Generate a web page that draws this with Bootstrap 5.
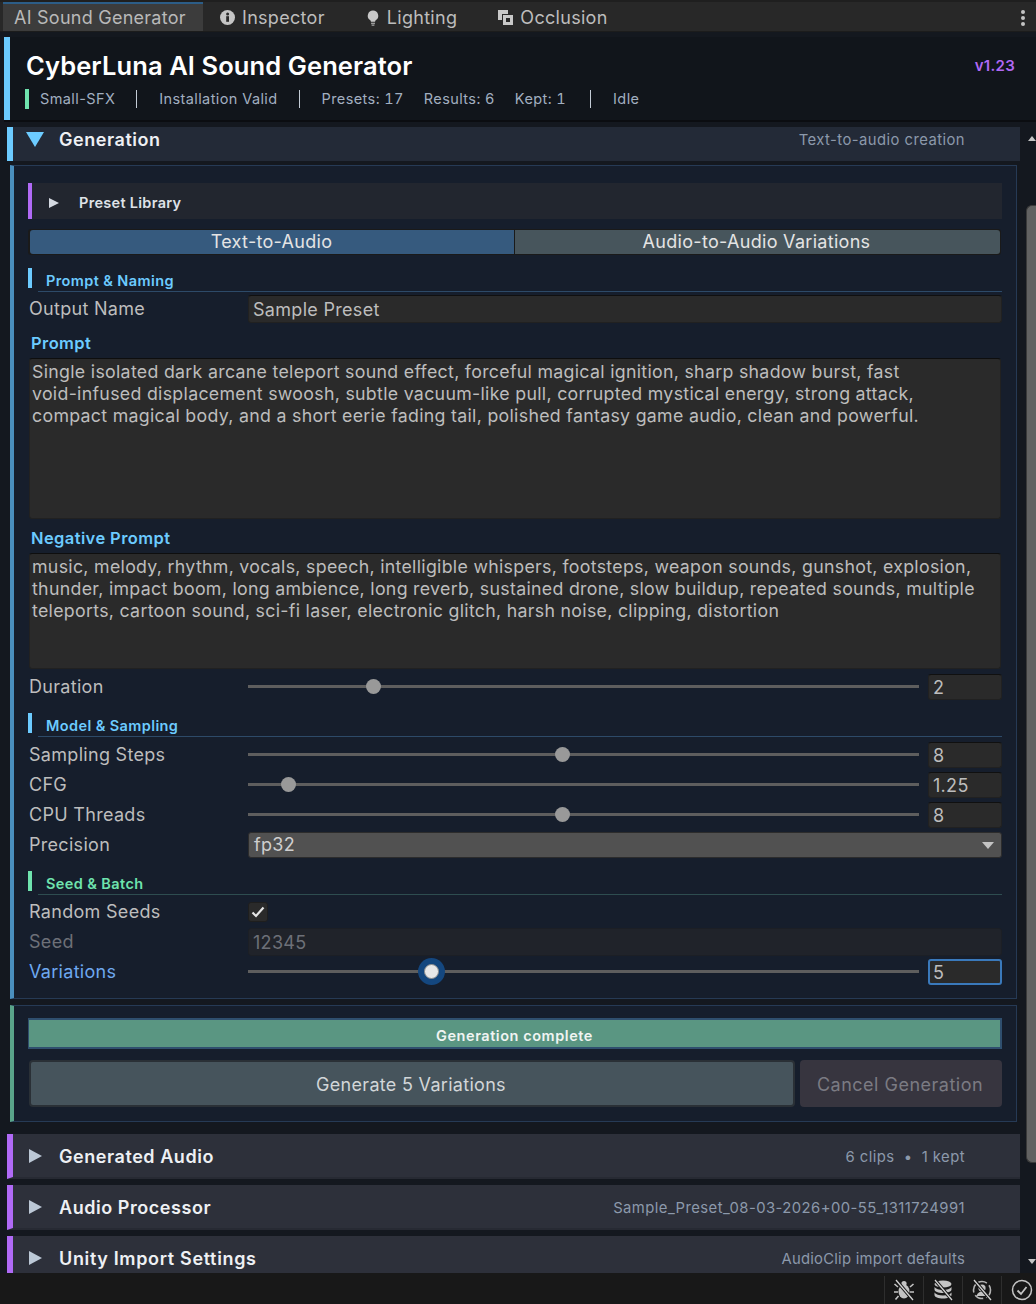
<!DOCTYPE html>
<html lang="en">
<head>
<meta charset="UTF-8">
<title>CyberLuna AI Sound Generator</title>
<link href="https://cdn.jsdelivr.net/npm/bootstrap@5.3.0/dist/css/bootstrap.min.css" rel="stylesheet">
<style>
html, body { height: 100%; overflow: hidden; }
body { background: #14181f; font-family: Inter, "Liberation Sans", sans-serif; color: #c4c4c4; font-size: 18px; letter-spacing: .3px; line-height: 22px; }
.app-frame { height: 1304px; width: 1036px; }

/* tab strip */
.tab-strip { height: 32px; background: #282828; border-top: 2px solid #1f1f1f; border-bottom: 1px solid #1c1c1c; color: #bdbdbd; padding-left: 3px; }
.tab-item { height: 29px; padding: 2px 24px 0 17px; gap: 7px; white-space: nowrap; }
.tab-item.is-active { width: 200px; padding-left: 11px; padding-right: 0; padding-top: 0; background: #3c3c3c; border-top: 2px solid #2c5d87; color: #b9b9b9; letter-spacing: .25px; }
.tab-kebab { margin-left: auto; margin-right: 11px; }

/* header */
.tool-head { height: 83px; margin: 5px 0 0 4px; background: #11151b; border-left: 6px solid #6ccbff; }
.tool-title { color: #fff; font-size: 25.5px; font-weight: 600; line-height: 34px; letter-spacing: .1px; padding: 12px 0 0 16px; }
.tool-ver { color: #b068f5; font-size: 15px; font-weight: 600; margin: 18px 21px 0 0; }
.tool-stats { font-size: 14.5px; color: #a2afc0; padding-left: 15px; margin-top: 6px; height: 20px; letter-spacing: .4px; }
.stat-tick { width: 4px; height: 20px; background: #6fe3ae; margin-right: 11px; }
.stat-bar { width: 1px; height: 18px; background: #c4ccd6; margin: 0 22px 0 21px; }
.stat-bar.is-last { margin-left: 24px; }
.stat-num { font-variant-numeric: tabular-nums; }
.stat-next { margin-left: 20px; }
.head-rule { height: 2px; margin-left: 4px; background: #0b0d11; }

/* scrolling area */
.scroll-area { height: 1146px; margin-top: 5px; overflow: hidden; }
.scroll-main { width: 1020px; padding-left: 7px; }
.scroll-rail { width: 16px; position: relative; }
.rail-up, .rail-down { position: absolute; right: 0; width: 0; height: 0; border-left: 4px solid transparent; border-right: 4px solid transparent; }
.rail-up { top: 9px; border-bottom: 5px solid #c4c4c4; }
.rail-down { top: 1132px; border-top: 5px solid #c4c4c4; }
.rail-thumb { position: absolute; left: 6px; right: 0; top: 78px; height: 958px; background: #626262; border: 1px solid #3a3a3a; border-right: 0; border-radius: 6px 0 0 6px; }

/* foldouts */
.fold-head { background: #2d303a; border-left: 6px solid #b06af6; border-bottom: 2px solid #272a33; height: 45px; margin-bottom: 6px; padding: 2px 55px 0 16px; }
.fold-head.is-open { background: #232a37; border-left-color: #6ccbff; height: 34px; margin-bottom: 4px; border-bottom: 0; padding-top: 0; padding-bottom: 8px; }
.fold-name { color: #eef0f4; font-size: 18px; font-weight: 600; letter-spacing: .55px; margin-left: 17px; }
.fold-name.is-wide { letter-spacing: .65px; }
.fold-note { color: #8c99ab; font-size: 14.8px; letter-spacing: .45px; margin-left: auto; }
.fold-note.is-tight { letter-spacing: .25px; }
.arrow-right { width: 0; height: 0; border-top: 7px solid transparent; border-bottom: 7px solid transparent; border-left: 13px solid #bcc8d6; margin-top: -2px; }
.arrow-down { width: 0; height: 0; border-left: 9px solid transparent; border-right: 9px solid transparent; border-top: 15px solid #6ccbff; margin-left: -3px; margin-right: -2px; margin-top: -2px; }

/* panels */
.tool-panel { background: #161e2c; border: 1px solid #263a55; border-left: 4px solid #4a8fbe; margin: 0 3px 6px 3px; padding: 17px 14px 0 14px; }
.panel-gen { height: 834px; }
.panel-run { height: 117px; border-left-color: #5aa48a; padding-top: 12px; margin-bottom: 12px; }
.preset-row { height: 36px; background: #22262f; border-left: 4px solid #b06af6; padding: 4px 0 0 17px; color: #dfe2e8; font-size: 14.5px; font-weight: 600; letter-spacing: .3px; margin-bottom: 10px; }
.preset-row .arrow-right { border-top-width: 5px; border-bottom-width: 5px; border-left-width: 10px; border-left-color: #d5dae2; margin-right: 20px; margin-top: 0; }
.seg-wrap { height: 26px; margin-right: 1px; background: #1a1a1a; border-radius: 3px; padding: 1px; }
.seg-btn { flex: 1 1 0; border-radius: 0; color: #e4e4e4; line-height: 23px; padding: 0; text-align: center; font-size: 18px; }
.seg-btn.is-on { background: #365a7e; border-radius: 3px 0 0 3px; margin-left: 1px; padding-right: 1px; }
.seg-btn.is-off { background: #47555c; border-radius: 0 3px 3px 0; margin-left: 1px; padding-right: 2px; }

.group-head { height: 24px; position: relative; }
.group-tick { width: 4px; height: 20px; background: #6ccbff; }
.group-name { color: #6ccbff; font-size: 14.5px; font-weight: 600; margin-left: 14px; letter-spacing: .4px; margin-top: 2px; }
.group-line { position: absolute; left: 10px; right: 0; bottom: 0; height: 1px; background: #2d4a68; }
.group-head.is-seed .group-tick { background: #6fe3ae; }
.group-head.is-seed .group-name { color: #6fe3ae; }
.group-head.is-seed .group-line { background: #2e4d50; }
.gap-seg { margin-top: 13px; }
.gap-model { margin-top: 11px; }
.gap-seed { margin-top: 11px; }
.gap-row { margin-top: 2px; }
.gap-row-wide { margin-top: 3px; }

.prop-row { height: 30px; padding-left: 1px; }
.prop-name { width: 219px; flex: none; color: #bdbdbd; }
.prop-name.is-dim { color: #6d7078; }
.prop-name.is-hot { color: #6ea8f0; }
.prop-input.form-control { background: #2a2a2a; border: 1px solid #212121; border-top-color: #101010; border-radius: 3px; color: #bdbdbd; font-size: 18px; line-height: 22px; padding: 0 4px; height: 28px; box-shadow: none; letter-spacing: .3px; }
.prop-input.is-short { width: 74px; flex: none; height: 26px; margin-left: 9px; padding: 0 3px 0 4px; }
.prop-input.is-focus { border: 2px solid #3a79bb; height: 26px; padding: 0 3px; }
.prop-input.is-off { background: #20232a; color: #6d7078; border-color: #1c1f25; }
.prop-slider.form-range { flex: 1 1 0; width: auto; height: 18px; padding: 0; margin-bottom: 2px; }
.prop-slider::-webkit-slider-runnable-track { height: 3px; background: #5e5e5e; border-radius: 0; }
.prop-slider::-webkit-slider-thumb { -webkit-appearance: none; width: 15px; height: 15px; margin-top: -6px; border-radius: 50%; background: #999; border: 0; }
.prop-slider.is-focus::-webkit-slider-thumb { background: #e8e8e8; border: 1px solid #8d8d8d; box-shadow: 0 0 0 6px #14477f; }

.text-title { color: #6ccbff; font-weight: 600; font-size: 16.5px; height: 22px; margin-top: 8px; padding-left: 3px; letter-spacing: .4px; }
.text-box.form-control { background: #2a2a2a; border: 1px solid #212121; border-top-color: #0e0e0e; border-radius: 3px; color: #bdbdbd; font-size: 17.75px; line-height: 22px; letter-spacing: .3px; padding: 2px; margin-top: 4px; margin-left: 1px; resize: none; box-shadow: none; overflow: hidden; white-space: pre; width: calc(100% - 2px); }
.box-prompt { height: 161px; }
.box-negative { height: 116px; }
.pick-box { height: 26px; background: #515151; border: 1px solid #2c2c2c; border-radius: 3px; color: #cfcfcf; padding: 0 5px; }
.pick-arrow { margin-left: auto; width: 0; height: 0; border-left: 6px solid transparent; border-right: 6px solid transparent; border-top: 7px solid #c4c4c4; margin-right: 2px; }
.tick-box { width: 20px; height: 20px; background: #2a2a2a; border: 1px solid #1e1e1e; border-radius: 3px; }

.done-bar { height: 31px; margin-bottom: 11px; padding-top: 4px; background: #5a9682; border: 2px solid #2f4f6e; border-width: 2px 2px 2px 1px; color: #f0f4f2; font-size: 14.5px; font-weight: 600; letter-spacing: .55px; }
.run-btn.btn { height: 47px; border-radius: 4px; font-size: 18px; letter-spacing: .3px; padding: 1px 2px 0 0; }
.run-main.btn { width: 766px; margin-left: 1px; background: #46545c; border: 2px solid #2a3036; color: #d2d6d8; }
.run-stop.btn { flex: 1 1 0; margin-left: 5px; background: #37353f; border: 0; color: #7b7b83; opacity: 1; letter-spacing: .5px; }

/* status bar */
.status-strip { height: 31px; background: #181818; }
.status-cell { width: 39px; height: 28px; margin-top: 3px; border-left: 1px solid #2e2e2e; }
.status-cell:last-child { width: 35px; padding-left: 5px; }
.tab-dots { gap: 2px; }
.tab-dots span { width: 4px; height: 4px; border-radius: 50%; background: #c4c4c4; }
</style>
</head>
<body>
<div class="app-frame d-flex flex-column">

    <!-- tabs -->
    <div class="tab-strip d-flex align-items-start flex-shrink-0">
        <div class="tab-item is-active d-flex align-items-center">AI Sound Generator</div>
        <div class="tab-item d-flex align-items-center">
            <svg width="15" height="15" viewBox="0 0 15 15"><circle cx="7.5" cy="7.5" r="7.5" fill="#c4c4c4"/><rect x="6.2" y="6.2" width="2.8" height="5.6" fill="#282828"/><circle cx="7.6" cy="3.9" r="1.5" fill="#282828"/></svg>
            Inspector
        </div>
        <div class="tab-item d-flex align-items-center">
            <svg width="14" height="18" viewBox="0 0 15 18"><path d="M7.5 1a5.6 5.6 0 0 0-3.2 10.2c.6.5.9 1.1 1 1.8h4.4c.1-.7.4-1.3 1-1.8A5.6 5.6 0 0 0 7.5 1z" fill="#c8c8c8"/><rect x="5.4" y="14" width="4.2" height="1.6" fill="#9a9a9a"/><rect x="6" y="16" width="3" height="1.4" fill="#9a9a9a"/></svg>
            Lighting
        </div>
        <div class="tab-item d-flex align-items-center">
            <svg width="15" height="15" viewBox="0 0 15 15"><path d="M0 0h10v4H4v6H0z" fill="#c8c8c8"/><path d="M5 5h10v10H5zM8 8v4h4V8z" fill="#c8c8c8" fill-rule="evenodd"/></svg>
            Occlusion
        </div>
        <div class="tab-kebab tab-dots d-flex flex-column pt-2"><span></span><span></span><span></span></div>
    </div>

    <!-- title block -->
    <div class="tool-head flex-shrink-0">
        <div class="d-flex justify-content-between align-items-start">
            <div class="tool-title">CyberLuna AI Sound Generator</div>
            <div class="tool-ver">v1.23</div>
        </div>
        <div class="tool-stats d-flex align-items-center">
            <span class="stat-tick"></span><span>Small-SFX</span><span class="stat-bar"></span><span>Installation Valid</span><span class="stat-bar"></span><span class="stat-num">Presets: 17</span><span class="stat-num stat-next">Results: 6</span><span class="stat-num stat-next">Kept: 1</span><span class="stat-bar is-last"></span><span>Idle</span>
        </div>
    </div>
    <div class="head-rule flex-shrink-0"></div>

    <div class="scroll-area d-flex flex-shrink-0">
        <div class="scroll-main">
            <div class="fold-head is-open d-flex align-items-center">
                <span class="arrow-down"></span><span class="fold-name">Generation</span><span class="fold-note">Text-to-audio creation</span>
            </div>

            <div class="tool-panel panel-gen">
                <div class="preset-row d-flex align-items-center"><span class="arrow-right"></span>Preset Library</div>
                <div class="seg-wrap d-flex">
                    <div class="seg-btn is-on">Text-to-Audio</div>
                    <div class="seg-btn is-off">Audio-to-Audio Variations</div>
                </div>

                <div class="group-head d-flex gap-seg"><span class="group-tick"></span><span class="group-name">Prompt &amp; Naming</span><span class="group-line"></span></div>
                <div class="prop-row d-flex align-items-center gap-row">
                    <span class="prop-name">Output Name</span>
                    <input class="form-control prop-input" value="Sample Preset">
                </div>
                <div class="text-title d-flex align-items-center">Prompt</div>
                <textarea class="form-control text-box box-prompt" rows="7">Single isolated dark arcane teleport sound effect, forceful magical ignition, sharp shadow burst, fast
void-infused displacement swoosh, subtle vacuum-like pull, corrupted mystical energy, strong attack,
compact magical body, and a short eerie fading tail, polished fantasy game audio, clean and powerful.</textarea>
                <div class="text-title d-flex align-items-center">Negative Prompt</div>
                <textarea class="form-control text-box box-negative" rows="5">music, melody, rhythm, vocals, speech, intelligible whispers, footsteps, weapon sounds, gunshot, explosion,
thunder, impact boom, long ambience, long reverb, sustained drone, slow buildup, repeated sounds, multiple
teleports, cartoon sound, sci-fi laser, electronic glitch, harsh noise, clipping, distortion</textarea>
                <div class="prop-row d-flex align-items-center gap-row-wide">
                    <span class="prop-name">Duration</span>
                    <input type="range" class="form-range prop-slider" step="0.1" value="18">
                    <input class="form-control prop-input is-short" value="2">
                </div>

                <div class="group-head d-flex gap-model"><span class="group-tick"></span><span class="group-name">Model &amp; Sampling</span><span class="group-line"></span></div>
                <div class="prop-row d-flex align-items-center gap-row-wide">
                    <span class="prop-name">Sampling Steps</span>
                    <input type="range" class="form-range prop-slider" step="0.1" value="46.8">
                    <input class="form-control prop-input is-short" value="8">
                </div>
                <div class="prop-row d-flex align-items-center">
                    <span class="prop-name">CFG</span>
                    <input type="range" class="form-range prop-slider" step="0.1" value="5">
                    <input class="form-control prop-input is-short" value="1.25">
                </div>
                <div class="prop-row d-flex align-items-center">
                    <span class="prop-name">CPU Threads</span>
                    <input type="range" class="form-range prop-slider" step="0.1" value="46.8">
                    <input class="form-control prop-input is-short" value="8">
                </div>
                <div class="prop-row d-flex align-items-center">
                    <span class="prop-name">Precision</span>
                    <div class="pick-box flex-grow-1 d-flex align-items-center">fp32<span class="pick-arrow"></span></div>
                </div>

                <div class="group-head is-seed d-flex gap-seed"><span class="group-tick"></span><span class="group-name">Seed &amp; Batch</span><span class="group-line"></span></div>
                <div class="prop-row d-flex align-items-center gap-row">
                    <span class="prop-name">Random Seeds</span>
                    <span class="tick-box d-flex align-items-center justify-content-center">
                        <svg width="14" height="12" viewBox="0 0 14 12"><path d="M1.5 6.5 5 10l7.5-8.5" fill="none" stroke="#e4e4e4" stroke-width="2.2"/></svg>
                    </span>
                </div>
                <div class="prop-row d-flex align-items-center">
                    <span class="prop-name is-dim">Seed</span>
                    <input class="form-control prop-input is-off" value="12345">
                </div>
                <div class="prop-row d-flex align-items-center">
                    <span class="prop-name is-hot">Variations</span>
                    <input type="range" class="form-range prop-slider is-focus" step="0.1" value="26.8">
                    <input class="form-control prop-input is-short is-focus" value="5">
                </div>
            </div>

            <div class="tool-panel panel-run">
                <div class="done-bar d-flex align-items-center justify-content-center">Generation complete</div>
                <div class="d-flex">
                    <button class="btn run-btn run-main">Generate 5 Variations</button>
                    <button class="btn run-btn run-stop" disabled>Cancel Generation</button>
                </div>
            </div>

            <div class="fold-head d-flex align-items-center">
                <span class="arrow-right"></span><span class="fold-name">Generated Audio</span>
                <span class="fold-note">6 clips &nbsp;•&nbsp; 1 kept</span>
            </div>
            <div class="fold-head d-flex align-items-center">
                <span class="arrow-right"></span><span class="fold-name">Audio Processor</span>
                <span class="fold-note">Sample_Preset_08-03-2026+00-55_1311724991</span>
            </div>
            <div class="fold-head d-flex align-items-center">
                <span class="arrow-right"></span><span class="fold-name is-wide">Unity Import Settings</span>
                <span class="fold-note is-tight">AudioClip import defaults</span>
            </div>
        </div>
        <div class="scroll-rail flex-shrink-0">
            <span class="rail-up"></span>
            <span class="rail-thumb"></span>
            <span class="rail-down"></span>
        </div>
    </div>

    <!-- status icons -->
    <div class="status-strip d-flex justify-content-end flex-shrink-0">
        <div class="status-cell d-flex align-items-center justify-content-center">
            <svg width="22" height="22" viewBox="0 0 22 22"><ellipse cx="11" cy="12.5" rx="5.5" ry="7" fill="#c4c4c4"/><circle cx="11" cy="4.5" r="2.6" fill="#c4c4c4"/><path d="M5 8 1.5 5M5 13H1M5.5 17l-3 3.5M17 8l3.5-3M17 13h4M16.5 17l3 3.5" stroke="#c4c4c4" stroke-width="1.6" fill="none"/><path d="M3 1l17 20" stroke="#181818" stroke-width="3.4"/><path d="M3 1l17 20" stroke="#d4d4d4" stroke-width="1.3"/></svg>
        </div>
        <div class="status-cell d-flex align-items-center justify-content-center">
            <svg width="22" height="22" viewBox="0 0 22 22"><ellipse cx="11" cy="5" rx="8.5" ry="3.6" fill="#c4c4c4"/><path d="M2.5 8v2.5c0 2 3.8 3.6 8.5 3.6s8.5-1.6 8.5-3.6V8c-1.2 1.9-4.6 3-8.5 3S3.7 9.900 2.5 8zM2.5 13.5V16c0 2 3.8 3.6 8.5 3.6s8.5-1.6 8.5-3.600v-2.500c-1.200 1.900-4.600 3-8.500 3s-7.300-1.100-8.500-3z" fill="#c4c4c4"/><path d="M3 1l17 20" stroke="#181818" stroke-width="3.4"/><path d="M3 1l17 20" stroke="#d4d4d4" stroke-width="1.3"/></svg>
        </div>
        <div class="status-cell d-flex align-items-center justify-content-center">
            <svg width="22" height="22" viewBox="0 0 22 22"><circle cx="11" cy="11" r="8.5" fill="none" stroke="#b4b4b4" stroke-width="1.6" stroke-dasharray="9 3"/><circle cx="11" cy="9" r="3.6" fill="#c4c4c4"/><path d="M5.5 17c.8-3 3-4.500 5.500-4.500s4.700 1.500 5.500 4.500" fill="#c4c4c4"/><path d="M3 1l17 20" stroke="#181818" stroke-width="3.4"/><path d="M3 1l17 20" stroke="#d4d4d4" stroke-width="1.3"/></svg>
        </div>
        <div class="status-cell d-flex align-items-center justify-content-center">
            <svg width="22" height="22" viewBox="0 0 22 22"><circle cx="11" cy="11" r="9.5" fill="none" stroke="#c4c4c4" stroke-width="1.5"/><path d="M6.5 11.5 10 15l5.5-7" fill="none" stroke="#c4c4c4" stroke-width="1.8"/></svg>
        </div>
    </div>
</div>
<script src="https://cdn.jsdelivr.net/npm/bootstrap@5.3.0/dist/js/bootstrap.bundle.min.js"></script>
</body>
</html>
